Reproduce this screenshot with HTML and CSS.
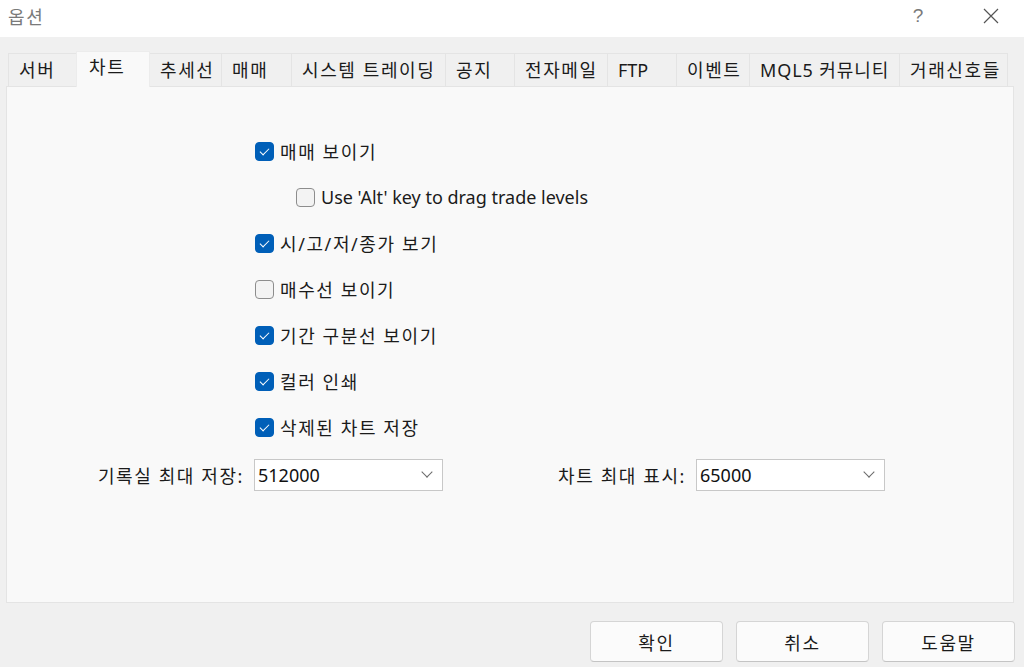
FILE: index.html
```html
<!DOCTYPE html>
<html lang="ko">
<head>
    <meta charset="UTF-8">
    <meta name="viewport" content="width=device-width, initial-scale=1.0">
    <title>옵션</title>
    <link rel="stylesheet" href="styles.css">
</head>
<body>
    <div class="titlebar">
        <span class="title">옵션</span>
        <div class="controls">
            <span class="help">?</span>
            <svg class="close" width="16" height="16" viewBox="0 0 16 16">
                <path d="M1 1 L15 15 M15 1 L1 15" stroke="#555" stroke-width="1.2" fill="none"/>
            </svg>
        </div>
    </div>

    <div class="dialog">
        <div class="tabs">
            <div class="tab" style="width: 68px">서버</div>
            <div class="tab active" style="width: 74px">차트</div>
            <div class="tab" style="width: 71px">추세선</div>
            <div class="tab" style="width: 70px">매매</div>
            <div class="tab" style="width: 154px">시스템 트레이딩</div>
            <div class="tab" style="width: 69px">공지</div>
            <div class="tab" style="width: 93px">전자메일</div>
            <div class="tab latin" style="width: 69px">FTP</div>
            <div class="tab" style="width: 73px">이벤트</div>
            <div class="tab mixed" style="width: 150px">MQL5 커뮤니티</div>
            <div class="tab last" style="width: 109px">거래신호들</div>
        </div>

        <div class="panel">
            <div class="checks">
                <label class="check"><span class="box on"></span>매매 보이기</label>
                <label class="check sub"><span class="box"></span>Use 'Alt' key to drag trade levels</label>
                <label class="check"><span class="box on"></span>시/고/저/종가 보기</label>
                <label class="check"><span class="box"></span>매수선 보이기</label>
                <label class="check"><span class="box on"></span>기간 구분선 보이기</label>
                <label class="check"><span class="box on"></span>컬러 인쇄</label>
                <label class="check"><span class="box on"></span>삭제된 차트 저장</label>
            </div>

            <div class="fields">
                <div class="field first">
                    <span class="label">기록실 최대 저장:</span>
                    <div class="select">512000<span class="chev"></span></div>
                </div>
                <div class="field second">
                    <span class="label">차트 최대 표시:</span>
                    <div class="select">65000<span class="chev"></span></div>
                </div>
            </div>
        </div>

        <div class="buttons">
            <button>확인</button>
            <button>취소</button>
            <button>도움말</button>
        </div>
    </div>
</body>
</html>
```

FILE: styles.css
```css
body {
    margin: 0;
    width: 1024px;
    height: 667px;
    overflow: hidden;
    background-color: #f0f0f0;
    font-family: 'Noto Sans', 'Noto Sans CJK KR', sans-serif;
    font-size: 18px;
    letter-spacing: 1.6px;
    color: #1b1b1b;
}
.titlebar {
    height: 37px;
    background-color: #ffffff;
    display: flex;
    align-items: center;
    justify-content: space-between;
    padding: 0 25px 0 8px;
}
.title {
    color: #7a7a7a;
    font-size: 18px;
    margin-top: -6px;
}
.controls {
    display: flex;
    align-items: center;
    gap: 58px;
    margin-top: -6px;
}
.help {
    color: #7a7a7a;
    font-size: 19px;
    font-family: 'Liberation Sans', sans-serif;
    font-weight: 300;
}
.dialog {
    padding: 14px 10px 0 6px;
}
.tabs {
    display: flex;
    align-items: flex-end;
    height: 35px;
    padding-left: 2px;
}
.tab {
    box-sizing: border-box;
    height: 33px;
    padding-left: 10px;
    line-height: 33px;
    white-space: nowrap;
    border-top: 1px solid #e4e4e4;
    border-left: 1px solid #e4e4e4;
    background-color: #f0f0f0;
}
.tab.latin {
    letter-spacing: 0;
}
.tab.mixed {
    letter-spacing: 0.9px;
}
.tab.last {
    border-right: 1px solid #e4e4e4;
}
.tab.active {
    height: 36px;
    line-height: 30px;
    padding-left: 12px;
    background-color: #f9f9f9;
    border-color: #ececec;
    border-right: 1px solid #ececec;
    margin-bottom: -1px;
    position: relative;
    z-index: 1;
}
.tab.active + .tab {
    border-left: none;
}
.panel {
    box-sizing: border-box;
    width: 1008px;
    height: 517px;
    background-color: #f9f9f9;
    border: 1px solid #e4e4e4;
}
.checks {
    display: flex;
    flex-direction: column;
    padding: 41px 0 0 248px;
}
.check {
    display: flex;
    align-items: center;
    gap: 6px;
    height: 46px;
}
.check.sub {
    padding-left: 41px;
    letter-spacing: 0;
}
.box {
    box-sizing: border-box;
    width: 19px;
    height: 19px;
    border-radius: 4px;
    border: 1px solid #8d8d8d;
    background-color: #f3f3f3;
    position: relative;
}
.box.on {
    background-color: #005fb8;
    border-color: #005fb8;
}
.box.on::after {
    content: '';
    position: absolute;
    left: 6px;
    top: 3px;
    width: 4px;
    height: 8px;
    border-right: 1.3px solid #fff;
    border-bottom: 1.3px solid #fff;
    transform: rotate(45deg);
}
.fields {
    display: flex;
    align-items: center;
    margin-top: 9px;
    padding-left: 53px;
}
.field {
    display: flex;
    align-items: center;
    gap: 10px;
}
.field.second {
    margin-left: 83px;
}
.label {
    text-align: right;
    white-space: nowrap;
}
.field.first .label {
    width: 184px;
}
.field.second .label {
    width: 160px;
}
.select {
    box-sizing: border-box;
    width: 189px;
    height: 32px;
    background-color: #ffffff;
    border: 1px solid #c8c8c8;
    padding-left: 3px;
    line-height: 30px;
    letter-spacing: 0;
    position: relative;
    color: #111;
}
.chev {
    position: absolute;
    right: 11px;
    top: 8px;
    width: 7px;
    height: 7px;
    border-right: 1px solid #6a6a6a;
    border-bottom: 1px solid #6a6a6a;
    transform: rotate(45deg);
}
.buttons {
    display: flex;
    justify-content: flex-end;
    gap: 13px;
    margin-top: 18px;
    width: 1009px;
}
button {
    box-sizing: border-box;
    width: 133px;
    height: 41px;
    background-color: #fbfbfb;
    border: 1px solid #d5d5d5;
    border-bottom-color: #c4c4c4;
    border-radius: 4px;
    font-family: 'Noto Sans', 'Noto Sans CJK KR', sans-serif;
    font-size: 18px;
    letter-spacing: 1.6px;
    color: #1b1b1b;
    padding: 0;
}
```
